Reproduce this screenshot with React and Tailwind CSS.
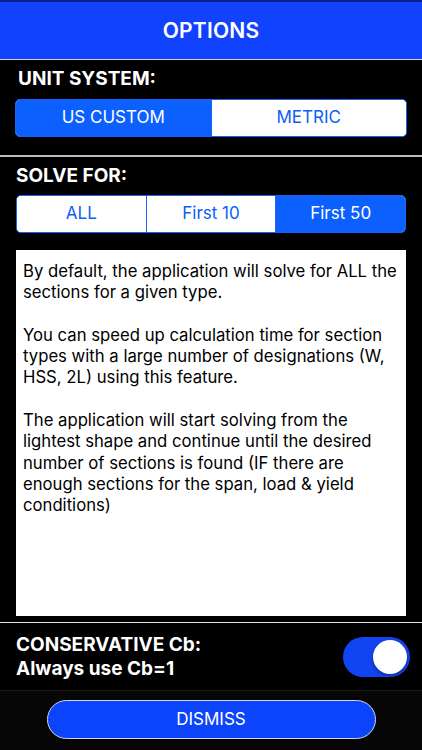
import React, { useState } from "react";

const UNITS = ["US CUSTOM", "METRIC"];
const SOLVE = ["ALL", "First 10", "First 50"];

const Segmented = ({ items, value, onChange, className }) => (
  <div
    className={`flex h-[38px] overflow-hidden rounded-[5px] border border-[#1a63f5] bg-white ${className}`}
  >
    {items.map((item, i) => (
      <button
        key={item}
        onClick={() => onChange(i)}
        className={`flex flex-1 items-center justify-center text-[17px] ${
          i > 0 ? "border-l border-[#1a63f5]" : ""
        } ${value === i ? "bg-[#0b60fe] text-white" : "bg-white text-[#0b5ff5]"}`}
      >
        {item}
      </button>
    ))}
  </div>
);

const App = () => {
  const [unit, setUnit] = useState(0);
  const [solve, setSolve] = useState(2);
  const [cb, setCb] = useState(true);

  return (
    <div
      className="flex h-[750px] w-[422px] flex-col overflow-hidden bg-black text-white"
      style={{ fontFamily: "Inter, 'Liberation Sans', sans-serif" }}
    >
      {/* Header */}
      <div className="flex h-[59px] shrink-0 items-center justify-center border-t-2 border-[#0b1f8a] bg-[#1142fd]">
        <h1 className="text-[21px] font-semibold tracking-[0.2px]">OPTIONS</h1>
      </div>
      <div className="h-px bg-[#d4d4d4]" />

      {/* Unit system */}
      <div className="px-[15px] pt-[4px] pb-[18px]">
        <div className="mb-[5px] pl-[3px] text-[19px] font-bold leading-[30px]">UNIT SYSTEM:</div>
        <Segmented items={UNITS} value={unit} onChange={setUnit} />
      </div>
      <div className="h-[2px] bg-[#bdbdbd]" />

      {/* Solve for */}
      <div className="px-[16px] pt-[4px] pb-[17px]">
        <div className="mb-[4px] text-[19px] font-bold leading-[30px]">SOLVE FOR:</div>
        <Segmented items={SOLVE} value={solve} onChange={setSolve} />
      </div>

      <div className="mx-[16px] h-[366px] shrink-0 bg-white px-[7px] pt-[11px] text-[16.7px] leading-[21.3px] text-black">
        <p>By default, the application will solve for ALL the sections for a given type.</p>
        <p className="mt-[21.3px]">
          You can speed up calculation time for section types with a large number of designations (W,
          HSS, 2L) using this feature.
        </p>
        <p className="mt-[21.3px]">
          The application will start solving from the lightest shape and continue until the desired
          number of sections is found (IF there are enough sections for the span, load &amp; yield
          conditions)
        </p>
      </div>

      <div className="mt-[6px] h-px bg-[#e6e6e6]" />

      {/* Conservative Cb */}
      <div className="flex h-[67px] shrink-0 items-center justify-between pl-[16px] pr-[12px]">
        <div className="text-[19px] font-bold leading-[24px]">
          <div>CONSERVATIVE Cb:</div>
          <div>Always use Cb=1</div>
        </div>
        <button
          onClick={() => setCb(!cb)}
          className={`flex h-[40px] w-[67px] items-center rounded-full p-[3px] ${
            cb ? "justify-end bg-[#1245f2]" : "justify-start bg-[#3a3a3a]"
          }`}
        >
          <span className="h-[34px] w-[34px] rounded-full bg-white shadow-[0_2px_4px_rgba(0,0,0,0.35)]" />
        </button>
      </div>
      <div className="h-px bg-[#1c1c1c]" />

      {/* Dismiss */}
      <div className="flex flex-1 justify-center bg-[#060606] pt-[9px]">
        <button className="h-[39px] w-[329px] rounded-full border border-[#cfd6ea] bg-[#0c44fb] text-[17px] text-white">
          DISMISS
        </button>
      </div>
    </div>
  );
};

export default App;
